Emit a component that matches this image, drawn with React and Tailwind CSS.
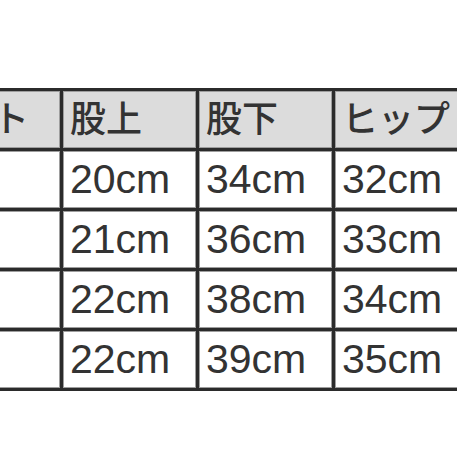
const header = ["ウエスト", "股上", "股下", "ヒップ"];
const rows = [
  ["", "20cm", "34cm", "32cm"],
  ["", "21cm", "36cm", "33cm"],
  ["", "22cm", "38cm", "34cm"],
  ["", "22cm", "39cm", "35cm"],
];

const App = () => {
  return (
    <div className="w-[457px] h-[457px] overflow-hidden bg-white pt-[88px]">
      <div
        className="ml-[-125px] w-max grid grid-cols-[182px_133px_133px_133px] auto-rows-[57px] gap-[3px] border-[3px] border-[#2b2b2b] bg-[#2b2b2b] text-[#333]"
        style={{ fontFamily: '"Liberation Sans", "Noto Sans CJK JP", sans-serif' }}
      >
        {header.map((h) => (
          <div
            key={h}
            className="flex items-center border border-[#9e9e9e] bg-[#dcdcdc] px-[6px] text-[36px] font-medium leading-none"
          >
            {h}
          </div>
        ))}
        {rows.map((row, i) =>
          row.map((cell, j) => (
            <div
              key={i + "-" + j}
              className="flex items-center border border-[#9e9e9e] bg-white px-[6px] text-[41px] leading-none"
            >
              {cell}
            </div>
          ))
        )}
      </div>
    </div>
  );
};

export default App;
